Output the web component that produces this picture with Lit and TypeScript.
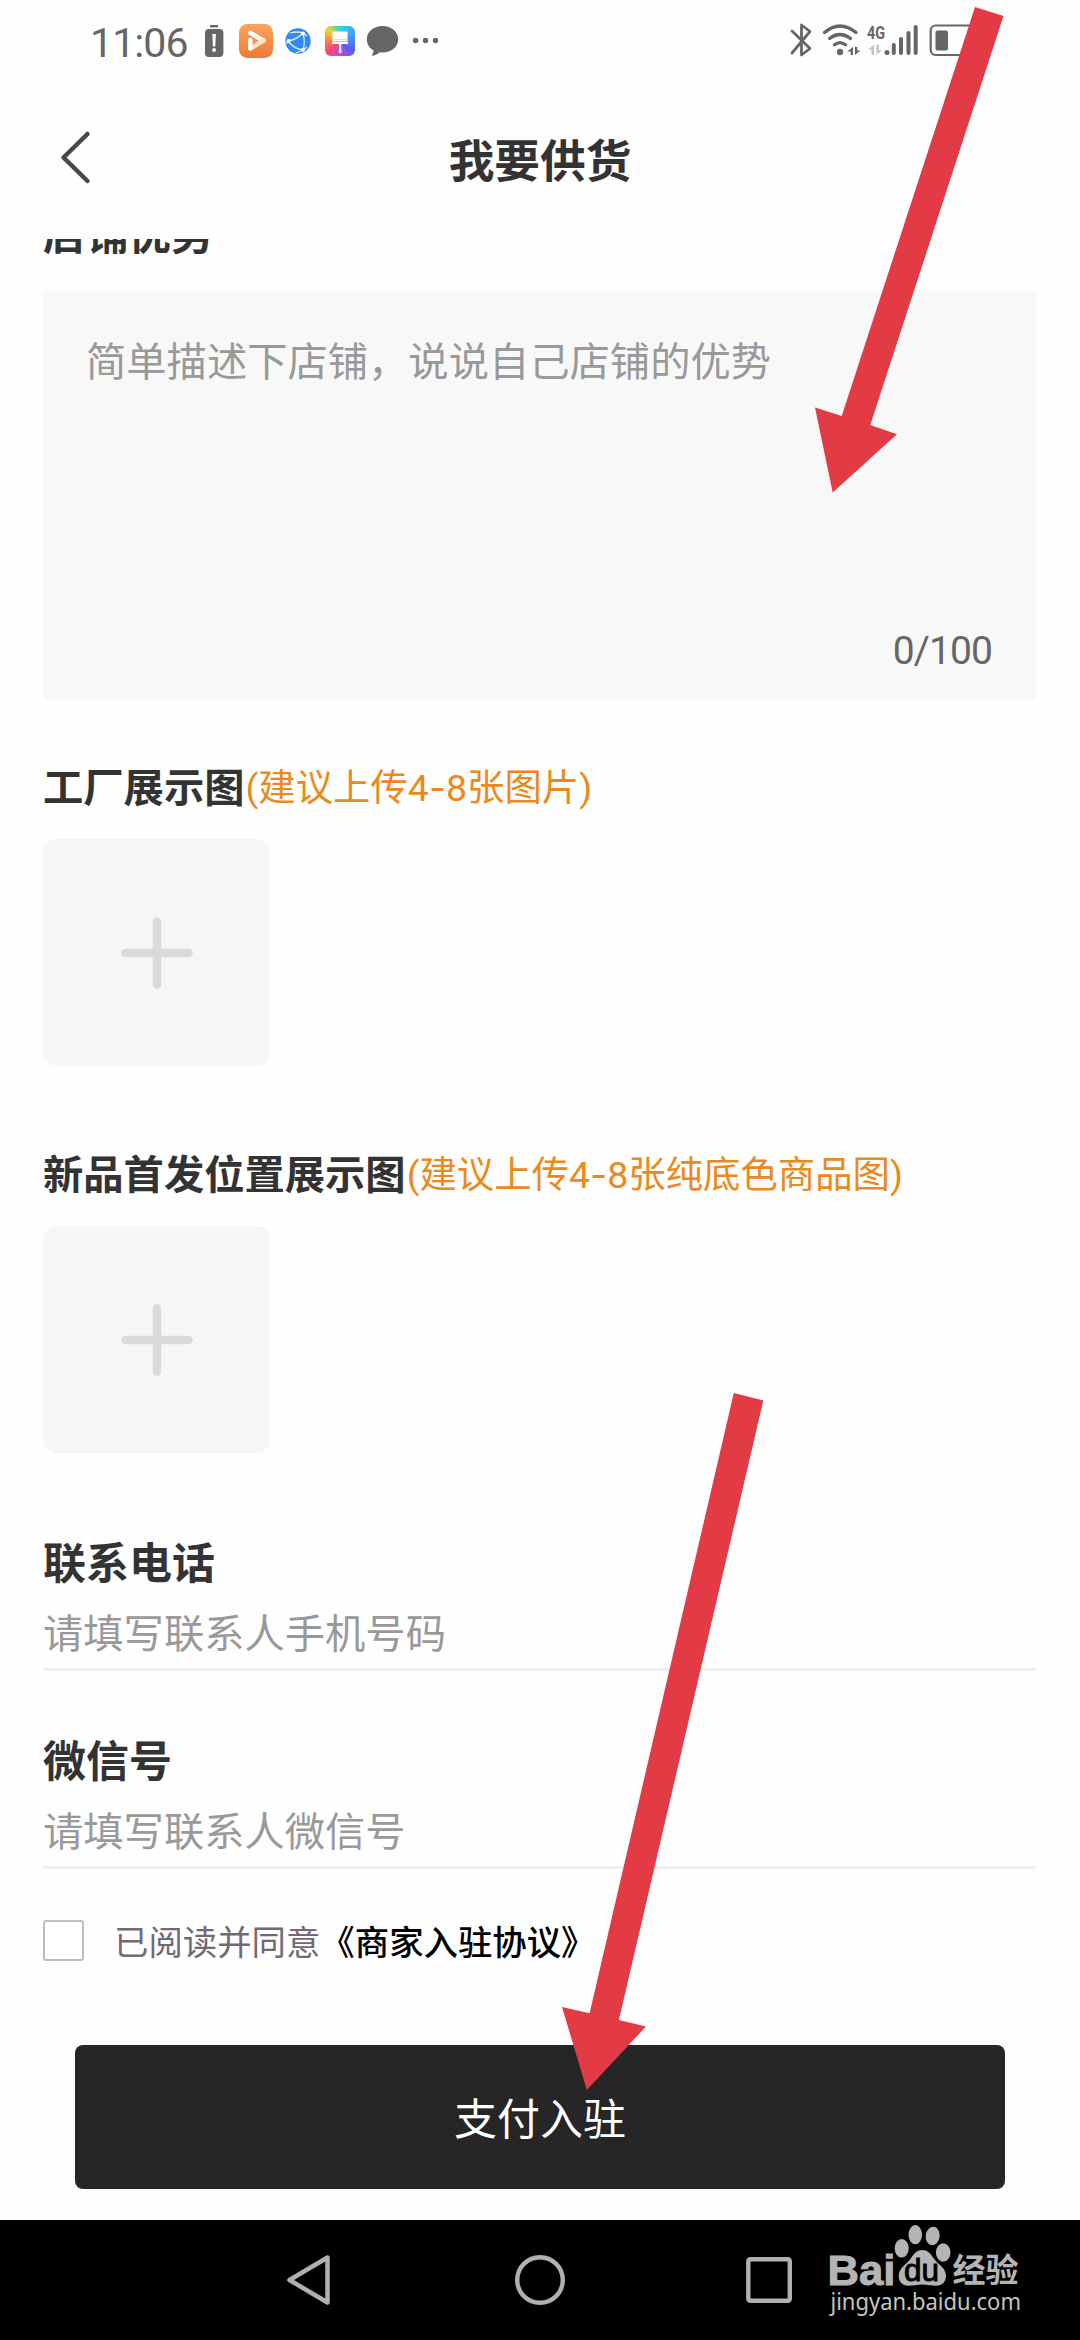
import { LitElement, html, css } from "lit";
import { customElement, property } from "lit/decorators.js";

const fonts = css`Roboto, "Noto Sans CJK SC", "Noto Sans", sans-serif`;

@customElement("status-bar")
class StatusBar extends LitElement {
  static styles = css`
    :host { display: flex; height: 80px; padding: 0 100px 0 90px; justify-content: space-between; color: #666; font-family: ${fonts}; }
    .group { display: flex; align-items: stretch; }
    .time { width: 111px; font-size: 41px; line-height: 86px; letter-spacing: -0.9px; white-space: nowrap; }
    svg { display: block; height: 80px; }
    .net { font: 700 19px Roboto, sans-serif; }
    .themes { width: 30px; height: 30px; border-radius: 6px; background: conic-gradient(#35d6ee, #3f9df5, #5b5bf3 130deg, #c04be0 180deg, #f8437e 225deg, #fb8a35 275deg, #e6d53e 315deg, #5fd7a0 345deg, #35d6ee); }
  `;
  render() {
    return html`
      <div class="group">
        <span class="time">11:06</span>
        <svg width="30" viewBox="201 0 30 80">
          <rect x="210" y="25" width="8" height="2.4" fill="#666"/>
          <rect x="205" y="29" width="18.4" height="28" rx="4" fill="#666"/>
          <path d="M212.3 34h3.600l-.6 12.500h-2.400z" fill="#fff"/><circle cx="214.100" cy="50" r="1.900" fill="#fff"/>
        </svg>
        <svg width="50" viewBox="231 0 50 80">
          <defs><linearGradient id="o" x1="0" y1="0" x2="0" y2="1"><stop offset="0" stop-color="#faa45d"/><stop offset="1" stop-color="#ef7a34"/></linearGradient></defs>
          <rect x="239" y="24" width="34" height="34" rx="8.5" fill="url(#o)"/>
          <path d="M250.500 33L263 40.500" stroke="#fff" stroke-width="4.600" stroke-linecap="round"/>
          <path d="M263.500 40.500L250.500 48.500" stroke="#fde0c8" stroke-width="4.600" stroke-linecap="round"/>
          <path d="M250.300 40v8" stroke="#fff" stroke-width="4.400" stroke-linecap="round"/>
        </svg>
        <svg width="36" viewBox="281 0 36 80">
          <circle cx="298" cy="41" r="12.700" fill="#3289ef"/>
          <path d="M288 41Q298 39 303 33M288 41Q294 49 303 50M303 33Q305.500 42 303 50M290 33Q297 31 303 33L307 36M303 50L307 47M303 50L296 53M288 41L286 44" stroke="#d9ebff" stroke-width="1.300" fill="none"/>
          <g fill="#fff"><circle cx="288.500" cy="41" r="2"/><circle cx="303" cy="33.500" r="2"/><circle cx="303" cy="50" r="2"/></g>
        </svg>
        <svg width="44" viewBox="317 0 44 80">
          <foreignObject x="325" y="26" width="30" height="30"><div class="themes"></div></foreignObject>
          <path d="M332.500 31.500h15v9.500h-15zM332 41.500h16v2.500h-6.500l-.4 3.500.6 5q-1.500 1.500-3 0l.6-5-.4-3.500h-7z" fill="#fff"/>
          <path d="M332.500 39.500h15" stroke="#e9d0f3" stroke-width="1"/>
        </svg>
        <svg width="46" viewBox="361 0 46 80">
          <path d="M382.500 26c8.800 0 15.700 5.700 15.700 13.200s-6.800 13.200-15.500 13.200c-1 0-2 0-2.900-.2-2.200 2-5 3.300-8.300 3.500 1.300-1.400 2-3.200 2-5.200-4-2.400-6.700-6.600-6.700-11.300C366.800 31.700 373.700 26 382.500 26z" fill="#666"/>
        </svg>
        <svg width="34" viewBox="407 0 34 80" fill="#666"><circle cx="415.600" cy="40.500" r="2.700"/><circle cx="425.500" cy="40.500" r="2.700"/><circle cx="435.500" cy="40.500" r="2.700"/></svg>
      </div>
      <div class="group">
        <svg width="30" viewBox="787 0 30 80"><path d="M792 31L810 48.500L801.500 55V25L810 31.500L792 53" fill="none" stroke="#666" stroke-width="2.800" stroke-linejoin="round" stroke-linecap="round"/></svg>
        <svg width="45" viewBox="817 0 45 80">
          <g fill="none" stroke="#666" stroke-width="3.300" stroke-linecap="round"><path d="M824.500 32.500Q840 19.500 856 32.500"/><path d="M829.500 38.500Q840 30.500 850.500 38.500"/><path d="M834.500 44.800Q840 40.500 845.500 44.800"/></g>
          <circle cx="840" cy="52" r="3.200" fill="#666"/>
          <path d="M847 51.500l6-4.500v8h-2.300v-3.500zM860.500 50.500l-5.500 4.500v-8h2.300v3.500z" fill="#666"/>
        </svg>
        <svg width="60" viewBox="862 0 60 80">
          <text class="net" x="867" y="38.500" textLength="18" lengthAdjust="spacingAndGlyphs" fill="#666">4G</text>
          <path d="M868 49.500l6-5v10.500h-2.500v-5.500zM882 50l-5.500 5v-10.500h2.500v5.500z" fill="#c4c4c4"/>
          <g fill="#666"><circle cx="887" cy="52.500" r="2.500"/><rect x="891.800" y="43" width="4" height="12" rx="2"/><rect x="899" y="37" width="4" height="18" rx="2"/><rect x="906.500" y="31" width="4" height="24" rx="2"/><rect x="913.700" y="25" width="4" height="30" rx="2"/></g>
        </svg>
        <svg width="58" viewBox="922 0 58 80"><rect x="930.700" y="25.500" width="44" height="29.500" rx="5" fill="none" stroke="#666" stroke-width="2.200"/><rect x="935.500" y="30.500" width="12.500" height="20" rx="2" fill="#666"/></svg>
      </div>`;
  }
}

@customElement("upload-field")
class UploadField extends LitElement {
  @property() label = "";
  @property() hint = "";
  static styles = css`
    :host { display: block; height: 387px; font-family: ${fonts}; }
    .head { display: flex; height: 100px; line-height: 100px; white-space: nowrap; }
    .label { font-size: 40.3px; font-weight: 700; color: #333; }
    .hint { font-size: 37.4px; line-height: 98px; color: #ea8a1c; padding-left: 1px; }
    .dash { font-family: Inter, sans-serif; }
    .tile { display: grid; place-items: center; width: 227px; height: 227px; border-radius: 14px; background: #f4f6f8; }
  `;
  render() {
    const [before, after] = this.hint.split("-");
    return html`
      <div class="head"><span class="label">${this.label}</span><span class="hint">${before}<span class="dash">-</span>${after}</span></div>
      <div class="tile"><svg width="72" height="72" viewBox="0 0 72 72"><path d="M36 4.500v63M4.500 36h63" stroke="#dadada" stroke-width="8.500" stroke-linecap="round"/></svg></div>`;
  }
}

@customElement("text-field")
class TextField extends LitElement {
  @property() label = "";
  @property() placeholder = "";
  static styles = css`
    :host { display: block; height: 197.5px; box-sizing: border-box; font-family: ${fonts}; white-space: nowrap; }
    .label { height: 70px; line-height: 71px; font-size: 43px; font-weight: 700; color: #333; }
    .value { height: 69px; line-height: 71px; font-size: 40.3px; color: #999; border-bottom: 3px solid #eee; }
  `;
  render() {
    return html`<div class="label">${this.label}</div><div class="value">${this.placeholder}</div>`;
  }
}

@customElement("nav-bar")
class NavBar extends LitElement {
  static styles = css`
    :host { display: flex; height: 120px; background: #000; padding-left: 283px; box-sizing: border-box; align-items: center; }
    .back { margin-right: 178px; }
    .home { margin-right: 175px; }
    .brand { margin-left: 30px; }
    .bai { font: 700 43px "Liberation Sans", sans-serif; }
    .du { font: 400 31px "Liberation Sans", sans-serif; }
    .cn { font: 700 33px "Noto Sans CJK SC", sans-serif; }
    .url { font: 400 24px "Noto Sans", sans-serif; }
  `;
  render() {
    return html`
      <svg class="back" width="50" height="60" viewBox="283 2250 50 60"><path d="M327.500 2257.500V2302.500L289.500 2280Z" fill="none" stroke="#b0b0b0" stroke-width="4.500" stroke-linejoin="round"/></svg>
      <svg class="home" width="58" height="60" viewBox="511 2250 58 60"><circle cx="540" cy="2280" r="22.800" fill="none" stroke="#b0b0b0" stroke-width="4.400"/></svg>
      <svg width="50" height="60" viewBox="744 2250 50 60"><rect x="748.300" y="2259.300" width="41.500" height="41.500" rx="2" fill="none" stroke="#b0b0b0" stroke-width="4.400"/></svg>
      <svg class="brand" width="200" height="120" viewBox="824 2220 200 120" fill="#b4b4b4">
        <text class="bai" x="827.500" y="2284.500" textLength="68" lengthAdjust="spacingAndGlyphs" stroke="#b4b4b4" stroke-width="1">Bai</text>
        <ellipse cx="901.700" cy="2248.300" rx="7" ry="9.300"/>
        <ellipse cx="915.300" cy="2234.700" rx="6.800" ry="9.600"/>
        <ellipse cx="932.700" cy="2236" rx="7" ry="9.300" transform="rotate(8 932.700 2236)"/>
        <ellipse cx="943.200" cy="2252.500" rx="7.300" ry="9.300"/>
        <path d="M922.300 2250c5 0 8.200 3.300 11.500 8.500 3.700 5.500 12.200 9.300 12.200 17.500 0 6-4.200 9.800-10 9.800-5 0-8-1.300-13.700-1.300s-9 1.300-14 1.300c-5.800 0-9.600-4-9.600-9.800 0-8.200 8.300-12 12-17.500 3.300-5.200 6.600-8.500 11.600-8.500z"/>
        <text class="du" x="904" y="2281" textLength="35" lengthAdjust="spacingAndGlyphs" fill="#000" stroke="#000" stroke-width=".9">du</text>
        <text class="cn" x="952.500" y="2281.500" textLength="66" lengthAdjust="spacingAndGlyphs">经验</text>
        <text class="url" x="830.500" y="2310" textLength="190.500" lengthAdjust="spacingAndGlyphs" fill="#c4c4c4">jingyan.baidu.com</text>
      </svg>`;
  }
}

@customElement("app-root")
class AppRoot extends LitElement {
  static styles = css`
    :host { display: flex; flex-direction: column; position: relative; width: 1080px; height: 2340px; overflow: hidden; background: #fefefe; font-family: ${fonts}; color: #333; }
    .title-bar { display: grid; grid-template-columns: 120px 1fr 120px; height: 159px; flex: none; align-items: start; }
    .back { margin: 49px 0 0 56px; display: block; }
    .title { text-align: center; font-size: 45.7px; font-weight: 700; line-height: 70px; padding-top: 48px; }
    .form { height: 1981px; flex: none; padding: 0 44px 0 43px; box-sizing: border-box; overflow: hidden; white-space: nowrap; }
    .section { height: 50px; line-height: 70px; font-size: 42.7px; font-weight: 700; display: flex; align-items: flex-end; }
    .section span { height: 89px; }
    .area { display: flex; flex-direction: column; justify-content: space-between; height: 412px; box-sizing: border-box; padding: 39px 44px 15px 43px; border-radius: 7px; background: #f8f8f8; font-size: 40.3px; line-height: 70px; color: #999; }
    .count { text-align: right; font-size: 39px; color: #666; letter-spacing: -0.9px; }
    .uploads { padding-top: 38px; }
    .fields { padding-top: 16px; }
    .agree { display: flex; align-items: center; height: 60px; margin-top: -14px; padding-top: 3px; font-size: 34.4px; line-height: 61px; color: #716a75; }
    .box { width: 41px; height: 41px; box-sizing: border-box; border: 2px solid #bdbdbd; border-radius: 3px; margin: -5px 30px 0 0; background: #fff; }
    .link { color: #000; font-weight: 500; }
    .submit { height: 144px; margin: 72px 31px 0 32px; border-radius: 8px; background: #262626; color: #fff; font-size: 43px; line-height: 150px; text-align: center; }
    .marks { position: absolute; left: 0; top: 0; pointer-events: none; }
  `;
  render() {
    return html`
      <status-bar></status-bar>
      <header class="title-bar">
        <svg class="back" width="38" height="60" viewBox="56 129 38 60"><path d="M87.500 134L63.500 157.500L87.500 181" fill="none" stroke="#484848" stroke-width="4.500" stroke-linecap="round" stroke-linejoin="round"/></svg>
        <div class="title">我要供货</div>
      </header>
      <main class="form">
        <div class="section"><span>店铺优势</span></div>
        <div class="area"><span>简单描述下店铺，说说自己店铺的优势</span><span class="count">0/100</span></div>
        <div class="uploads">
          <upload-field label="工厂展示图" hint="(建议上传4-8张图片)"></upload-field>
          <upload-field label="新品首发位置展示图" hint="(建议上传4-8张纯底色商品图)"></upload-field>
        </div>
        <div class="fields">
          <text-field label="联系电话" placeholder="请填写联系人手机号码"></text-field>
          <text-field label="微信号" placeholder="请填写联系人微信号"></text-field>
        </div>
        <div class="agree"><i class="box"></i><span>已阅读并同意</span><span class="link">《商家入驻协议》</span></div>
        <div class="submit">支付入驻</div>
      </main>
      <nav-bar></nav-bar>
      <svg class="marks" width="1080" height="2340" fill="#e33b46">
        <polygon points="975,7 1003.500,16 870.300,425 897,434.300 832.700,492.500 815,407.500 841.700,416"/>
        <polygon points="733.800,1393 763.300,1400.500 618.900,2020 646,2026.500 586.800,2090 562,2007 589.600,2013.300"/>
      </svg>`;
  }
}
